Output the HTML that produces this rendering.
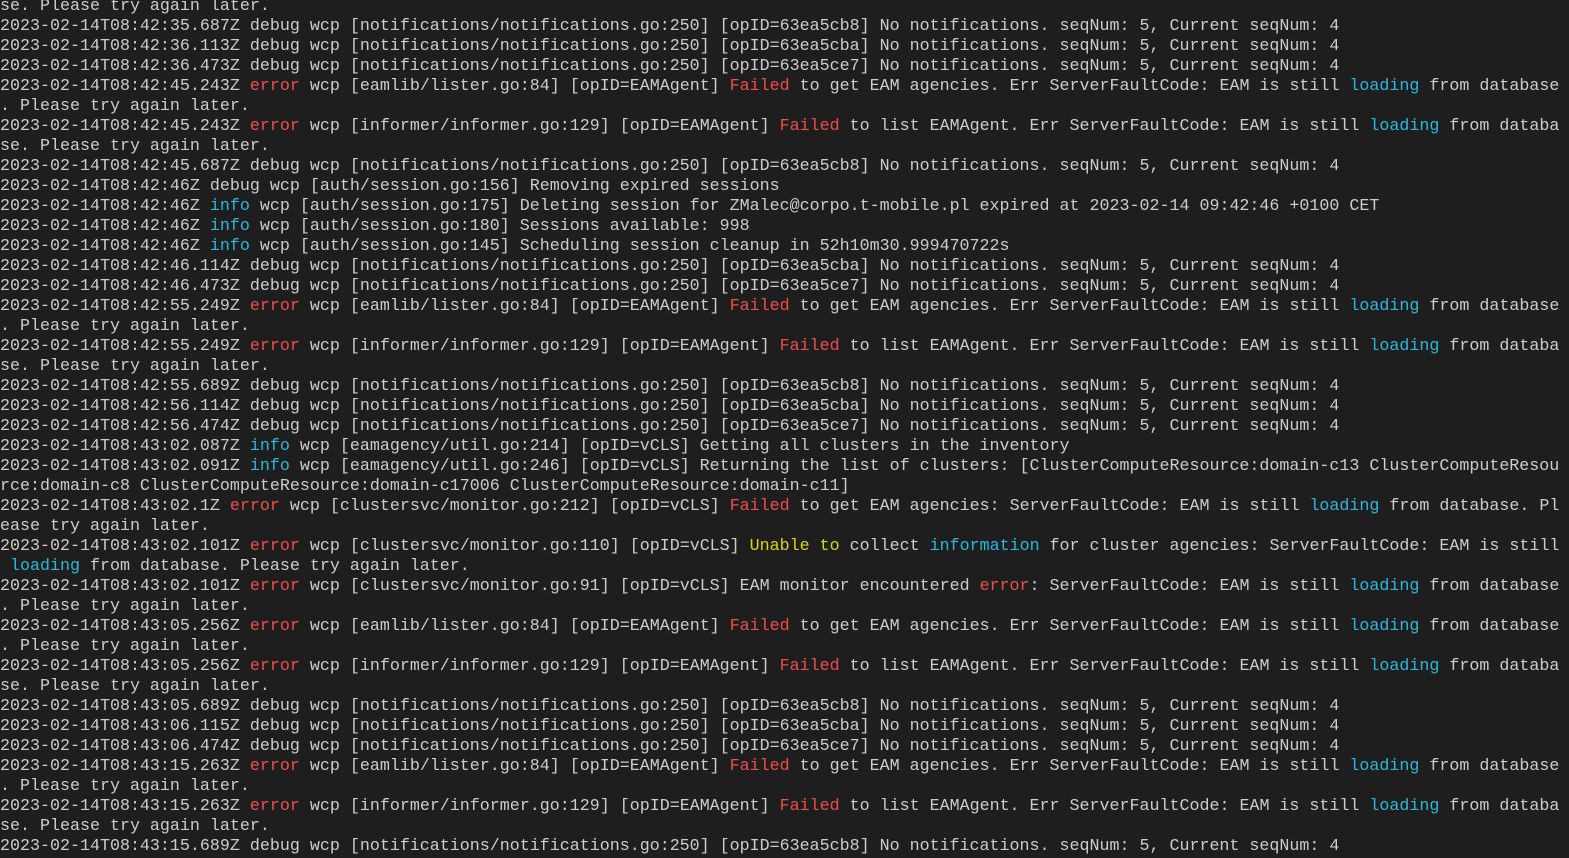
<!DOCTYPE html>
<html><head><meta charset="utf-8"><style>
html,body{margin:0;padding:0;background:#1e1e1e;width:1569px;height:858px;overflow:hidden}
pre{margin:0;position:absolute;top:-3px;left:0;font-family:"Liberation Mono","DejaVu Sans Mono",monospace;font-size:16.67px;line-height:20px;color:#cccccc;white-space:pre}
.r{color:#f14c4c}.b{color:#29b8db}.y{color:#d7d710}
</style></head><body><pre>se. Please try again later.
2023-02-14T08:42:35.687Z debug wcp [notifications/notifications.go:250] [opID=63ea5cb8] No notifications. seqNum: 5, Current seqNum: 4
2023-02-14T08:42:36.113Z debug wcp [notifications/notifications.go:250] [opID=63ea5cba] No notifications. seqNum: 5, Current seqNum: 4
2023-02-14T08:42:36.473Z debug wcp [notifications/notifications.go:250] [opID=63ea5ce7] No notifications. seqNum: 5, Current seqNum: 4
2023-02-14T08:42:45.243Z <span class="r">error</span> wcp [eamlib/lister.go:84] [opID=EAMAgent] <span class="r">Failed</span> to get EAM agencies. Err ServerFaultCode: EAM is still <span class="b">loading</span> from database
. Please try again later.
2023-02-14T08:42:45.243Z <span class="r">error</span> wcp [informer/informer.go:129] [opID=EAMAgent] <span class="r">Failed</span> to list EAMAgent. Err ServerFaultCode: EAM is still <span class="b">loading</span> from databa
se. Please try again later.
2023-02-14T08:42:45.687Z debug wcp [notifications/notifications.go:250] [opID=63ea5cb8] No notifications. seqNum: 5, Current seqNum: 4
2023-02-14T08:42:46Z debug wcp [auth/session.go:156] Removing expired sessions
2023-02-14T08:42:46Z <span class="b">info</span> wcp [auth/session.go:175] Deleting session for ZMalec@corpo.t-mobile.pl expired at 2023-02-14 09:42:46 +0100 CET
2023-02-14T08:42:46Z <span class="b">info</span> wcp [auth/session.go:180] Sessions available: 998
2023-02-14T08:42:46Z <span class="b">info</span> wcp [auth/session.go:145] Scheduling session cleanup in 52h10m30.999470722s
2023-02-14T08:42:46.114Z debug wcp [notifications/notifications.go:250] [opID=63ea5cba] No notifications. seqNum: 5, Current seqNum: 4
2023-02-14T08:42:46.473Z debug wcp [notifications/notifications.go:250] [opID=63ea5ce7] No notifications. seqNum: 5, Current seqNum: 4
2023-02-14T08:42:55.249Z <span class="r">error</span> wcp [eamlib/lister.go:84] [opID=EAMAgent] <span class="r">Failed</span> to get EAM agencies. Err ServerFaultCode: EAM is still <span class="b">loading</span> from database
. Please try again later.
2023-02-14T08:42:55.249Z <span class="r">error</span> wcp [informer/informer.go:129] [opID=EAMAgent] <span class="r">Failed</span> to list EAMAgent. Err ServerFaultCode: EAM is still <span class="b">loading</span> from databa
se. Please try again later.
2023-02-14T08:42:55.689Z debug wcp [notifications/notifications.go:250] [opID=63ea5cb8] No notifications. seqNum: 5, Current seqNum: 4
2023-02-14T08:42:56.114Z debug wcp [notifications/notifications.go:250] [opID=63ea5cba] No notifications. seqNum: 5, Current seqNum: 4
2023-02-14T08:42:56.474Z debug wcp [notifications/notifications.go:250] [opID=63ea5ce7] No notifications. seqNum: 5, Current seqNum: 4
2023-02-14T08:43:02.087Z <span class="b">info</span> wcp [eamagency/util.go:214] [opID=vCLS] Getting all clusters in the inventory
2023-02-14T08:43:02.091Z <span class="b">info</span> wcp [eamagency/util.go:246] [opID=vCLS] Returning the list of clusters: [ClusterComputeResource:domain-c13 ClusterComputeResou
rce:domain-c8 ClusterComputeResource:domain-c17006 ClusterComputeResource:domain-c11]
2023-02-14T08:43:02.1Z <span class="r">error</span> wcp [clustersvc/monitor.go:212] [opID=vCLS] <span class="r">Failed</span> to get EAM agencies: ServerFaultCode: EAM is still <span class="b">loading</span> from database. Pl
ease try again later.
2023-02-14T08:43:02.101Z <span class="r">error</span> wcp [clustersvc/monitor.go:110] [opID=vCLS] <span class="y">Unable to</span> collect <span class="b">information</span> for cluster agencies: ServerFaultCode: EAM is still
 <span class="b">loading</span> from database. Please try again later.
2023-02-14T08:43:02.101Z <span class="r">error</span> wcp [clustersvc/monitor.go:91] [opID=vCLS] EAM monitor encountered <span class="r">error</span>: ServerFaultCode: EAM is still <span class="b">loading</span> from database
. Please try again later.
2023-02-14T08:43:05.256Z <span class="r">error</span> wcp [eamlib/lister.go:84] [opID=EAMAgent] <span class="r">Failed</span> to get EAM agencies. Err ServerFaultCode: EAM is still <span class="b">loading</span> from database
. Please try again later.
2023-02-14T08:43:05.256Z <span class="r">error</span> wcp [informer/informer.go:129] [opID=EAMAgent] <span class="r">Failed</span> to list EAMAgent. Err ServerFaultCode: EAM is still <span class="b">loading</span> from databa
se. Please try again later.
2023-02-14T08:43:05.689Z debug wcp [notifications/notifications.go:250] [opID=63ea5cb8] No notifications. seqNum: 5, Current seqNum: 4
2023-02-14T08:43:06.115Z debug wcp [notifications/notifications.go:250] [opID=63ea5cba] No notifications. seqNum: 5, Current seqNum: 4
2023-02-14T08:43:06.474Z debug wcp [notifications/notifications.go:250] [opID=63ea5ce7] No notifications. seqNum: 5, Current seqNum: 4
2023-02-14T08:43:15.263Z <span class="r">error</span> wcp [eamlib/lister.go:84] [opID=EAMAgent] <span class="r">Failed</span> to get EAM agencies. Err ServerFaultCode: EAM is still <span class="b">loading</span> from database
. Please try again later.
2023-02-14T08:43:15.263Z <span class="r">error</span> wcp [informer/informer.go:129] [opID=EAMAgent] <span class="r">Failed</span> to list EAMAgent. Err ServerFaultCode: EAM is still <span class="b">loading</span> from databa
se. Please try again later.
2023-02-14T08:43:15.689Z debug wcp [notifications/notifications.go:250] [opID=63ea5cb8] No notifications. seqNum: 5, Current seqNum: 4
</pre></body></html>
